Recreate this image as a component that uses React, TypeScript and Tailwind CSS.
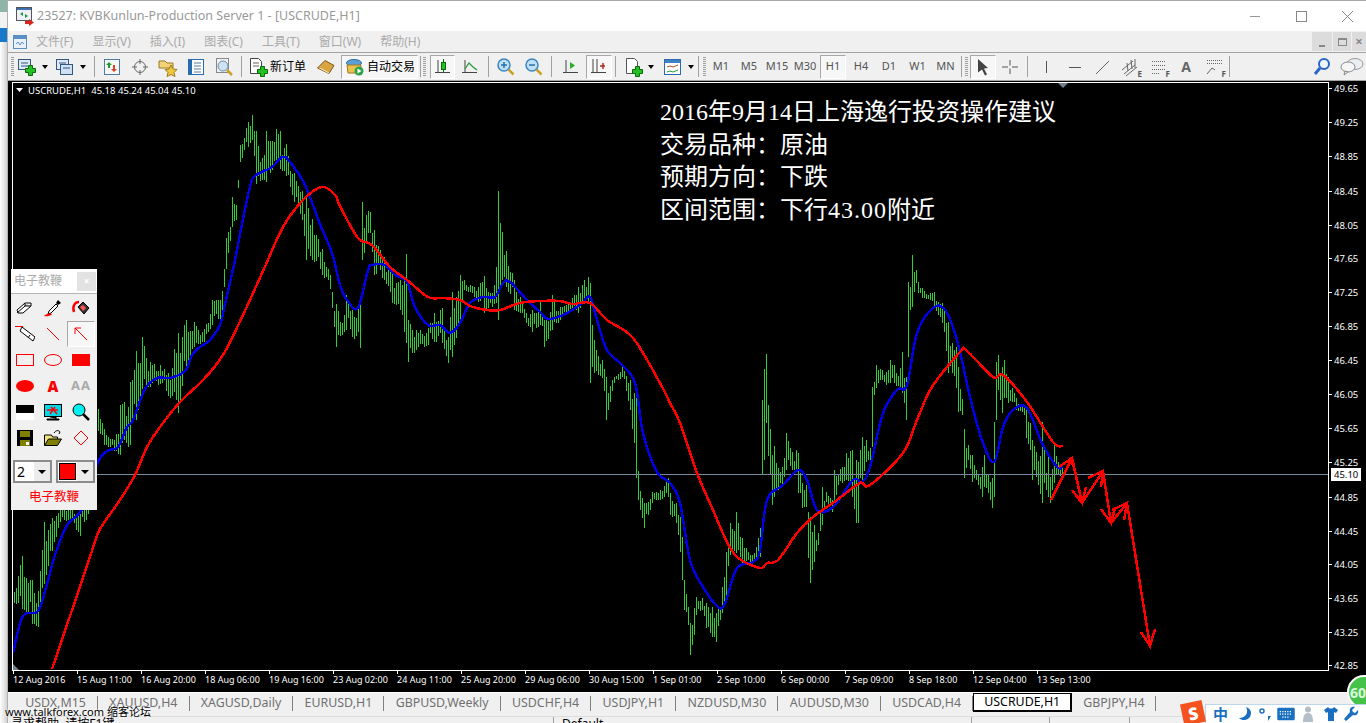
import type { ReactNode } from "react";

const BLUE = "13,653 23,616 38,611 47,584 55,555 67,525 82,509 97,464 107,451 118,447 127,427 133,420 145,389 157,378 170,378 185,371 192,355 200,347 210,340 220,325 225,304 235,260 242,224 250,187 255,176 272,167 282,157 290,162 305,185 320,224 332,253 340,285 347,300 358,308 368,270 373,265 385,265 395,275 407,282 415,307 428,325 440,325 450,333 460,323 470,303 483,297 495,297 503,283 510,282 527,300 540,312 548,319 563,315 580,305 590,297 597,320 607,350 622,365 635,383 643,433 657,472 670,483 680,503 690,560 703,587 718,607 725,603 737,568 753,562 760,550 767,500 783,485 798,470 807,480 817,510 833,507 853,480 862,482 870,467 883,413 897,390 907,385 917,333 933,308 945,310 957,340 970,397 982,440 994,462 1003,427 1013,410 1027,408 1042,443 1057,467 1063,466";
const RED = "52,669 70,616 92,551 100,529 120,500 135,475 147,447 160,427 180,402 203,380 223,355 243,315 263,271 283,227 303,200 322,187 335,195 340,206 358,238 372,245 390,267 407,280 428,297 443,298 460,300 470,306 487,310 500,310 520,303 540,301 560,301 573,304 590,303 607,320 633,338 660,383 670,403 680,423 697,473 713,510 727,542 738,558 760,568 767,563 778,560 797,533 813,517 837,500 860,483 870,485 903,453 917,420 932,387 960,352 967,351 993,377 1003,375 1027,402 1053,442 1063,446";

// x, high, low of the bars, read off the picture
const KEYS: [number, number, number][] = [
  [12,591,602],[22,556,609],[32,580,624],[38,591,627],[45,522,584],[52,518,551],[60,500,522],[70,505,520],[80,511,536],[90,470,510],
  [98,409,431],[105,429,445],[115,440,451],[120,405,455],[130,382,445],[137,351,420],[143,337,389],[150,362,387],[160,365,384],[168,373,396],
  [178,333,413],[187,320,371],[195,322,347],[205,329,342],[212,300,325],[222,291,318],[227,238,269],[232,197,227],[237,205,220],[240,145,162],
  [248,122,147],[253,115,140],[257,131,184],[265,155,180],[267,131,182],[276,129,162],[281,131,169],[287,144,176],[295,173,202],[302,191,220],
  [307,198,260],[313,219,260],[322,249,275],[330,275,289],[337,304,347],[342,323,335],[346,295,330],[352,310,337],[360,300,348],[363,202,260],
  [370,212,233],[375,230,275],[385,257,280],[392,273,303],[400,280,310],[406,254,343],[409,320,362],[416,330,350],[428,328,345],[435,313,342],
  [443,308,343],[448,337,363],[452,292,357],[460,275,320],[465,280,290],[475,287,297],[485,276,313],[492,293,307],[497,267,303],[499,191,320],
  [502,232,280],[507,251,287],[515,280,310],[520,297,313],[527,313,323],[533,310,332],[540,302,325],[545,320,347],[552,295,330],[560,307,320],
  [572,298,308],[578,287,313],[585,280,300],[589,277,303],[591,283,383],[595,340,373],[603,360,378],[606,377,420],[615,377,383],[622,367,377],
  [630,380,410],[637,393,478],[639,471,500],[644,503,528],[652,492,503],[660,490,500],[668,478,497],[671,493,515],[677,503,523],[680,517,552],
  [682,537,580],[685,580,610],[688,607,625],[691,623,655],[694,608,635],[697,597,615],[703,598,610],[707,603,628],[713,607,637],[717,613,642],
  [722,587,613],[726,552,603],[731,523,555],[737,512,553],[743,538,563],[750,555,565],[757,547,560],[760,528,557],[762,400,475],[764,369,460],
  [766,354,423],[768,405,456],[770,429,475],[772,455,505],[774,446,497],[778,468,490],[782,467,485],[787,433,470],[792,452,470],[797,450,470],
  [799,453,493],[803,483,508],[807,485,507],[809,512,558],[811,517,583],[815,525,562],[819,533,545],[822,487,525],[827,492,502],[832,500,512],
  [835,470,500],[842,467,483],[847,453,480],[852,450,497],[856,460,523],[859,462,523],[862,437,482],[867,440,462],[870,448,467],[872,387,447],
  [875,382,395],[877,365,388],[882,370,380],[887,372,385],[890,360,383],[895,365,383],[900,368,390],[903,352,393],[906,377,420],[908,282,357],
  [910,287,310],[912,268,307],[913,255,273],[916,270,283],[918,282,293],[923,288,298],[930,293,300],[935,292,308],[942,303,323],[945,307,332],
  [948,322,373],[952,343,373],[956,347,388],[958,367,412],[962,399,415],[965,429,478],[968,445,460],[972,455,482],[977,470,480],[982,467,497],
  [985,455,487],[988,475,493],[992,478,508],[995,422,497],[997,362,420],[999,355,390],[1002,367,413],[1005,360,398],[1009,377,403],[1013,388,402],
  [1017,398,410],[1022,405,412],[1027,407,438],[1030,423,450],[1033,440,480],[1037,452,477],[1042,422,487],[1043,460,503],[1047,473,490],[1049,452,497],
  [1051,477,503],[1055,443,483],[1059,462,475],[1063,465,478],
];

function barsPath() {
  const map = new Map<number, [number, number]>();
  for (const [x, hi, lo] of KEYS) {
    const bx = x - (x % 2);
    const old = map.get(bx);
    map.set(bx, old ? [Math.min(old[0], hi), Math.max(old[1], lo)] : [hi, lo]);
  }
  const xs = [...map.keys()].sort((a, b) => a - b);
  let d = "";
  for (let i = 0; i < xs.length - 1; i++) {
    const a = xs[i];
    const b = xs[i + 1];
    const [h0, l0] = map.get(a)!;
    const [h1, l1] = map.get(b)!;
    for (let x = a; x < b; x += 2) {
      const t = (x - a) / (b - a);
      const hi = h0 + (h1 - h0) * t;
      const lo = l0 + (l1 - l0) * t;
      if (x === a) {
        d += `M${x + 0.5} ${hi}V${lo}`;
      } else {
        // bars between two read points only fill part of the band
        const r1 = Math.abs(Math.sin(x * 12.9898));
        const r2 = Math.abs(Math.sin(x * 78.233));
        const len = (lo - hi) * (0.45 + 0.3 * r1);
        const top = Math.round(hi + (lo - hi - len) * r2);
        d += `M${x + 0.5} ${top}V${Math.round(top + len)}`;
      }
    }
  }
  const last = xs[xs.length - 1];
  return d + `M${last + 0.5} ${map.get(last)![0]}V${map.get(last)![1]}`;
}

// catmull-rom through the read points, the moving averages are smooth curves
function smooth(points: string) {
  const p = points.split(" ").map((s) => s.split(",").map(Number));
  let d = `M${p[0][0]} ${p[0][1]}`;
  for (let i = 0; i < p.length - 1; i++) {
    const a = p[Math.max(i - 1, 0)];
    const b = p[i];
    const c = p[i + 1];
    const e = p[Math.min(i + 2, p.length - 1)];
    const c1 = [b[0] + (c[0] - a[0]) / 6, b[1] + (c[1] - a[1]) / 6];
    const c2 = [c[0] - (e[0] - b[0]) / 6, c[1] - (e[1] - b[1]) / 6];
    d += `C${c1[0].toFixed(1)} ${c1[1].toFixed(1)} ${c2[0].toFixed(1)} ${c2[1].toFixed(1)} ${c[0]} ${c[1]}`;
  }
  return d;
}

const PRICES: [string, number][] = [
  ["49.65", 88],["49.25", 122],["48.85", 156],["48.45", 191],["48.05", 225],["47.65", 258],["47.25", 292],["46.85", 326],["46.45", 360],
  ["46.05", 394],["45.65", 428],["45.25", 462],["44.85", 497],["44.45", 531],["44.05", 564],["43.65", 598],["43.25", 632],["42.85", 665],
];

const TIMES = [
  "12 Aug 2016","15 Aug 11:00","16 Aug 20:00","18 Aug 06:00","19 Aug 16:00","23 Aug 02:00","24 Aug 11:00","25 Aug 20:00","29 Aug 06:00",
  "30 Aug 15:00","1 Sep 01:00","2 Sep 10:00","6 Sep 00:00","7 Sep 09:00","8 Sep 18:00","12 Sep 04:00","13 Sep 13:00",
];

const ARROWS = [
  "1051,500 1072,458", "1059,467 1072,458 1073,467",
  "1072,458 1082,503", "1072,490 1082,503 1086,487",
  "1082,503 1103,471", "1088,478 1103,471 1101,487",
  "1103,471 1111,523", "1101,509 1111,523 1115,508",
  "1111,523 1127,503", "1112,510 1127,503 1124,520",
  "1127,503 1150,646", "1141,632 1150,646 1155,629",
];

const MENUS = ["文件(F)", "显示(V)", "插入(I)", "图表(C)", "工具(T)", "窗口(W)", "帮助(H)"];
const TABS = ["USDX,M15", "XAUUSD,H4", "XAGUSD,Daily", "EURUSD,H1", "GBPUSD,Weekly", "USDCHF,H4", "USDJPY,H1", "NZDUSD,M30", "AUDUSD,M30", "USDCAD,H4"];

function Ico({ children }: { children: ReactNode }) {
  return <svg viewBox="0 0 20 20" className="h-5 w-5 shrink-0">{children}</svg>;
}

function Plus({ x, y }: { x: number; y: number }) {
  return <path transform={`translate(${x} ${y})`} d="M3.5.5h4v3h3v4h-3v3h-4v-3h-3v-4h3z" fill="#25c025" stroke="#0b6b0b" />;
}

function Grip() {
  return <div className="mx-[1px] h-[20px] w-[3px] shrink-0 bg-[repeating-linear-gradient(#a0a0a0_0_1px,transparent_1px_2px)]" />;
}

function Sep({ className }: { className: string }) {
  return (
    <div className={`flex shrink-0 justify-center ${className}`}>
      <div className="h-[21px] w-[1px] bg-[#a0a0a0]" />
    </div>
  );
}

function Caret() {
  return <div className="h-0 w-0 shrink-0 border-x-[3px] border-t-[4px] border-x-transparent border-t-black" />;
}

function Cell({ className, children }: { className: string; children?: ReactNode }) {
  return <div className={`flex h-[24px] shrink-0 items-center justify-center ${className}`}>{children}</div>;
}

const PRESSED = "border border-t-[#a8a8a8] border-l-[#a8a8a8] border-r-white border-b-white bg-[#f7f7f7]";

function Axes() {
  return <path d="M5 3v13M2 15.500h15" stroke="#444" fill="none" />;
}

function Toolbar() {
  return (
    <div className="flex h-[29px] shrink-0 items-center border-t border-b border-[#a4a4a4] bg-[#f0f0f0] pl-[1px] text-[11px] text-[#555]">
      <div className="ml-[1px]"><Grip /></div>
      <Cell className="w-[38px] justify-start pl-[2px]">
        <Ico><rect x="1.500" y="2.500" width="12" height="10" fill="#dfe9f5" stroke="#33577f" /><path d="M4 6h7M4 9h7" stroke="#33577f" /><Plus x={8} y={8} /></Ico>
        <div className="ml-[5px]"><Caret /></div>
      </Cell>
      <Cell className="w-[38px] justify-start pl-[2px]">
        <Ico><rect x="1.500" y="2.500" width="12" height="10" fill="#dfe9f5" stroke="#33577f" /><rect x="5.500" y="7.500" width="12" height="10" fill="#cfe0f2" stroke="#33577f" /><path d="M4 6h7M8 11h7" stroke="#33577f" /></Ico>
        <div className="ml-[5px]"><Caret /></div>
      </Cell>
      <Sep className="w-[7px]" />
      <Cell className="w-[28px]">
        <Ico><rect x="2.500" y="2.500" width="15" height="15" fill="#f5f5f5" stroke="#4d7ca8" /><path d="M7 5l-3 3h2v3h2V8h2z" fill="#1f9a2c" /><path d="M12 15l3-3h-2V8h-2v4H9z" fill="#d9462a" /></Ico>
      </Cell>
      <Cell className="w-[28px]">
        <Ico><circle cx="10" cy="10" r="5.500" fill="none" stroke="#666" /><path d="M10 2v5M10 13v5M2 10h5M13 10h5" stroke="#666" /></Ico>
      </Cell>
      <Cell className="w-[28px]">
        <Ico><path d="M1 4h6l2 2h6v5H1z" fill="#f3d27a" stroke="#9a7a20" /><path d="M13 8l2 4 4 .5-3 3 1 4-4-2-4 2 1-4-3-3 4-.5z" fill="#f0c83a" stroke="#9a7a20" /></Ico>
      </Cell>
      <Cell className="w-[28px]">
        <Ico><rect x="2.500" y="2.500" width="15" height="15" fill="#fff" stroke="#2a6bb0" /><rect x="3" y="3" width="3" height="14" fill="#2a6bb0" /><path d="M8 6h7M8 9h7M8 12h7M8 15h7" stroke="#5a7a9a" /></Ico>
      </Cell>
      <Cell className="w-[28px]">
        <Ico><rect x="2.500" y="1.500" width="12" height="14" fill="#eef2f6" stroke="#888" /><circle cx="9" cy="9" r="5" fill="#cfe2f2" stroke="#6b8aa8" /><path d="M13 13l5 5" stroke="#c9a227" strokeWidth="2.500" /></Ico>
      </Cell>
      <Sep className="w-[7px]" />
      <Cell className="w-[66px] justify-start gap-[2px] pl-[3px] text-[12px] text-black">
        <Ico><path d="M2.500 1.500h8l3 3v12h-11z" fill="#fff" stroke="#444" /><path d="M5 6h6M5 9h6" stroke="#666" /><Plus x={9} y={9} /></Ico>
        <span>新订单</span>
      </Cell>
      <Cell className="w-[30px]">
        <Ico><path d="M1.500 11L9 3.500l9 5-5 8z" fill="#d9a441" stroke="#7a5a18" /><path d="M3.500 11l9.500 5" stroke="#fff1c4" /></Ico>
      </Cell>
      <Cell className={`w-[77px] justify-start gap-[2px] pl-[3px] text-[12px] text-black ${PRESSED}`}>
        <Ico><ellipse cx="9" cy="6" rx="7.500" ry="3.500" fill="#5aa0d8" stroke="#2f6a9c" /><path d="M2 8h14l-1 8H3z" fill="#eec24a" stroke="#9a7a20" /><circle cx="14" cy="14" r="4.500" fill="#2ea34a" /><path d="M12.500 11.500v5l4-2.500z" fill="#fff" /></Ico>
        <span>自动交易</span>
      </Cell>
      <Sep className="w-[4px]" />
      <Grip />
      <Cell className={`ml-[3px] w-[25px] ${PRESSED}`}>
        <Ico><Axes /><rect x="8.500" y="5.500" width="4" height="7" fill="#25c025" stroke="#0b6b0b" /><path d="M10.500 2v3M10.500 13v2" stroke="#0b6b0b" /></Ico>
      </Cell>
      <Cell className="w-[30px]">
        <Ico><Axes /><path d="M5 12l4-6 4 4 4 3" stroke="#2a9a3a" fill="none" strokeWidth="1.300" /></Ico>
      </Cell>
      <Sep className="w-[7px]" />
      <Cell className="w-[28px]">
        <Ico><circle cx="8" cy="8" r="6" fill="#bfe0f5" stroke="#3c86c0" strokeWidth="1.500" /><path d="M5 8h6M8 5v6" stroke="#2a70a8" strokeWidth="1.500" /><path d="M12.500 12.500l5 5" stroke="#c9a227" strokeWidth="2.500" /></Ico>
      </Cell>
      <Cell className="w-[28px]">
        <Ico><circle cx="8" cy="8" r="6" fill="#bfe0f5" stroke="#3c86c0" strokeWidth="1.500" /><path d="M5 8h6" stroke="#2a70a8" strokeWidth="1.500" /><path d="M12.500 12.500l5 5" stroke="#c9a227" strokeWidth="2.500" /></Ico>
      </Cell>
      <Sep className="w-[7px]" />
      <Cell className="w-[31px]">
        <Ico><Axes /><path d="M9 5v7l5-3.500z" fill="#25b025" /></Ico>
      </Cell>
      <Cell className={`w-[26px] ${PRESSED}`}>
        <Ico><path d="M4 2v14M8 2v14M2 15.500h15" stroke="#444" fill="none" /><path d="M11 9h5M14 6v6" stroke="#b02a1a" strokeWidth="1.500" /></Ico>
      </Cell>
      <Sep className="w-[7px]" />
      <Cell className="w-[38px] justify-start pl-[5px]">
        <Ico><path d="M2.500 1.500h8l3 3v12h-11z" fill="#fff" stroke="#555" /><Plus x={8} y={9} /></Ico>
        <div className="ml-[4px]"><Caret /></div>
      </Cell>
      <Cell className="w-[38px] justify-start pl-[6px]">
        <Ico><rect x="1.500" y="2.500" width="16" height="15" fill="#fff" stroke="#2a6bb0" /><rect x="2" y="3" width="15" height="3" fill="#3f82c4" /><path d="M4 10l3-1 3 1 5-2" stroke="#b5501e" fill="none" /><path d="M4 15l3-1 3 1 5-2" stroke="#2a9a3a" fill="none" /></Ico>
        <div className="ml-[5px]"><Caret /></div>
      </Cell>
      <Sep className="w-[7px]" />
      <Grip />
      <Cell className="w-[28px]">M1</Cell>
      <Cell className="w-[28px]">M5</Cell>
      <Cell className="w-[28px]">M15</Cell>
      <Cell className="w-[28px]">M30</Cell>
      <Cell className={`mx-[1px] w-[26px] ${PRESSED}`}>H1</Cell>
      <Cell className="w-[28px]">H4</Cell>
      <Cell className="w-[28px]">D1</Cell>
      <Cell className="w-[29px]">W1</Cell>
      <Cell className="w-[27px]">MN</Cell>
      <Sep className="w-[5px]" />
      <Grip />
      <Cell className={`ml-[1px] w-[26px] ${PRESSED}`}>
        <Ico><path d="M5 2l10 9-4 .5 3 6-2 1-3-6-4 3z" fill="#444" /></Ico>
      </Cell>
      <Cell className="w-[28px]">
        <Ico><path d="M10 3v5.500M10 11.500V17M2 10h6M12 10h6" stroke="#555" /></Ico>
      </Cell>
      <Sep className="w-[7px]" />
      <Cell className="w-[29px]"><Ico><path d="M10.500 4v12" stroke="#555" /></Ico></Cell>
      <Cell className="w-[29px]"><Ico><path d="M4 10.500h12" stroke="#555" /></Ico></Cell>
      <Cell className="w-[28px]"><Ico><path d="M3 17L16 4" stroke="#666" /></Ico></Cell>
      <Cell className="relative w-[27px]">
        <Ico><path d="M1 13L12 4M3 17l11-9M5 19L16 10M6 6l1 8M10 3l1 9M14 2l0 9" stroke="#666" fill="none" /></Ico>
        <span className="absolute right-[2px] bottom-[1px] text-[8px] leading-none font-bold">E</span>
      </Cell>
      <Cell className="relative w-[28px]">
        <Ico><path d="M4 4.500h13M4 8.500h13M4 12.500h13M4 16.500h8" stroke="#666" strokeDasharray="1 1" /></Ico>
        <span className="absolute right-[2px] bottom-[1px] text-[8px] leading-none font-bold">F</span>
      </Cell>
      <Cell className="w-[28px] text-[14px] font-bold text-[#666]">A</Cell>
      <Cell className="relative w-[28px]">
        <Ico><path d="M3 3.500h15M3 6.500h15" stroke="#666" strokeDasharray="1 1" /><path d="M3 17l5-6 3 2" stroke="#666" fill="none" /></Ico>
        <span className="absolute right-[2px] bottom-[1px] text-[8px] leading-none font-bold">F</span>
      </Cell>
      <Sep className="w-[3px]" />
      <Cell className="ml-auto w-[28px]">
        <Ico><circle cx="12" cy="7" r="5" fill="#eef5fc" stroke="#2a66c8" strokeWidth="2" /><path d="M8 11l-5 6" stroke="#2a66c8" strokeWidth="3" /></Ico>
      </Cell>
      <Cell className="ml-[2px] w-[28px]">
        <svg viewBox="0 0 24 20" className="h-5 w-6">
          <ellipse cx="15" cy="7" rx="8" ry="5.500" fill="#e8eef2" stroke="#999" />
          <ellipse cx="8" cy="10" rx="7" ry="5" fill="#f6f6f6" stroke="#888" />
          <path d="M5 14l-1 4 4-3z" fill="#f6f6f6" stroke="#888" />
        </svg>
      </Cell>
    </div>
  );
}

function Chart() {
  return (
    <svg viewBox="8 81 1358 611" className="block h-[611px] w-[1358px] bg-black font-['Noto_Sans',sans-serif] text-[9.500px]">
      <path d={barsPath()} stroke="#32cd32" strokeWidth="1" shapeRendering="crispEdges" />
      <path d="M12 474.500H1329" stroke="#778899" shapeRendering="crispEdges" />
      <path d={smooth(BLUE)} fill="none" stroke="#0000e0" strokeWidth="2.500" shapeRendering="crispEdges" />
      <path d={smooth(RED)} fill="none" stroke="#ff0000" strokeWidth="2.500" shapeRendering="crispEdges" />
      {ARROWS.map((p) => (
        <polyline key={p} points={p} fill="none" stroke="#ff0000" strokeWidth="2.500" shapeRendering="crispEdges" />
      ))}
      <rect x="12.500" y="82.500" width="1316" height="588" fill="none" stroke="#fff" shapeRendering="crispEdges" />
      <path d="M1058 83h10l-5 5z" fill="#708090" />
      <path d="M13 664v6h6z" fill="#708090" />
      <path d="M16 88h7l-3.500 4z" fill="#fff" />
      <text x="28" y="94" fill="#fff">USCRUDE,H1&#160;&#160;45.18 45.24 45.04 45.10</text>
      {PRICES.map(([label, y]) => (
        <g key={label}>
          <path d={`M1329 ${y + 0.5}h3`} stroke="#fff" />
          <text x="1334" y={y + 4} fill="#fff">{label}</text>
        </g>
      ))}
      <rect x="1331" y="468" width="30" height="13" fill="#fff" />
      <text x="1334" y="478" fill="#000">45.10</text>
      {TIMES.map((label, i) => (
        <g key={label}>
          <path d={`M${13.5 + i * 64} 671v3`} stroke="#fff" />
          <text x={13 + i * 64} y="683" fill="#fff" className="text-[9px]">{label}</text>
        </g>
      ))}
    </svg>
  );
}

function Panel() {
  return (
    <div className="absolute top-[269px] left-[11px] h-[241px] w-[86px] bg-[#f0f0f0]">
      <div className="flex h-[25px] items-center justify-between border-b border-[#b4b4b4] bg-white pr-[1px] pl-[3px] text-[12px] text-[#aaa]">
        <span>电子教鞭</span>
        <div className="flex h-[19px] w-[19px] items-center justify-center bg-[#e2e2e2] text-[10px] font-bold text-white">×</div>
      </div>
      <div className="mt-[1px] grid grid-cols-[28px_28px_28px]">
        <PanelCell><path d="M2 12l8-7h6v3l-8 7H3z" fill="#fff" stroke="#000" /><path d="M10 5v3h6M10 8l-8 7" stroke="#000" fill="#ccc" /></PanelCell>
        <PanelCell><path d="M15 2l3 3-3 2-2-2z" fill="#000" /><path d="M13 6l-7 7-1 3 3-1 7-7z" fill="#fff" stroke="#000" /><path d="M1 18c2-2 6-3 8-2 0 1-4 3-8 2z" fill="#f00" /></PanelCell>
        <PanelCell><path d="M3 14C1 8 4 4 8 4" fill="none" stroke="#f00" strokeWidth="2.500" /><path d="M7 9l5-5 6 6-5 6z" fill="#333" stroke="#000" /><path d="M9 9l3-2 3 3-3 3z" fill="#f55" /></PanelCell>
        <PanelCell><path d="M0 2.500h8" stroke="#f00" /><path d="M7 3l13 10-2 4L5 7z" fill="#fff" stroke="#000" /><path d="M15 11l-2 3" stroke="#000" /></PanelCell>
        <PanelCell><path d="M4 4l12 12" stroke="#f00" /></PanelCell>
        <div className={`flex h-[26px] items-center justify-center ${PRESSED}`}>
          <Ico><path d="M4 4l12 12M4 4v6M4 4h6" stroke="#f00" fill="none" /></Ico>
        </div>
        <PanelCell><rect x="1.500" y="4.500" width="17" height="11" fill="none" stroke="#f00" /></PanelCell>
        <PanelCell><ellipse cx="10" cy="10" rx="8.500" ry="5.500" fill="none" stroke="#f00" /></PanelCell>
        <PanelCell><rect x="1" y="4" width="18" height="12" fill="#f00" /></PanelCell>
        <PanelCell><ellipse cx="10" cy="10" rx="9" ry="6" fill="#f00" /></PanelCell>
        <div className="flex h-[26px] items-center justify-center text-[15px] font-black text-[#f00]">A</div>
        <div className="flex h-[26px] items-center justify-center text-[13px] font-bold tracking-[1px] text-[#aaa]">AA</div>
        <PanelCell><rect x="1" y="3" width="18" height="8" fill="#000" /><rect x="1" y="11" width="18" height="7" fill="#fff" /></PanelCell>
        <PanelCell><rect x="1.500" y="2.500" width="17" height="12" fill="#00d8e8" stroke="#000" /><path d="M4 8h11M12 5L7 12M8 5l6 7" stroke="#f00" strokeWidth="1.500" /><path d="M7 15h6v2H4v1h12v-1h-3" fill="#000" stroke="#000" /></PanelCell>
        <PanelCell><circle cx="8" cy="8" r="6" fill="#00f0f0" stroke="#000" /><path d="M12 12l6 6" stroke="#000" strokeWidth="2.500" /></PanelCell>
        <PanelCell><rect x="2" y="2" width="16" height="16" fill="#000" /><rect x="5" y="3" width="10" height="6" fill="#808000" /><rect x="5" y="12" width="10" height="6" fill="#808000" /><rect x="11" y="14" width="3" height="3" fill="#fff" /></PanelCell>
        <PanelCell><path d="M1.500 17.500V7h7l1 2h5v2" fill="#f4e27a" stroke="#000" /><path d="M1.500 17.500l4-6.500h13l-4 6.500z" fill="#808000" stroke="#000" /><path d="M11 5c2-3 5-3 6-1l-1 2" fill="none" stroke="#000" /></PanelCell>
        <PanelCell><path d="M10 3l7 7-7 7-7-7z" fill="none" stroke="#f00" /></PanelCell>
      </div>
      <div className="mt-[9px] flex h-[23px] justify-between px-[2px]">
        <div className="flex w-[39px] border-2 border-[#8c8c8c] bg-white">
          <span className="flex-1 pl-[2px] text-[14px] leading-[19px] text-black">2</span>
          <div className="flex w-[16px] items-center justify-center bg-[#ececec]"><div className="h-0 w-0 border-x-[4px] border-t-[4px] border-x-transparent border-t-black" /></div>
        </div>
        <div className="flex w-[39px] border-2 border-[#8c8c8c] bg-[#f0f0f0]">
          <div className="flex flex-1 items-center justify-center"><div className="h-[17px] w-[17px] border border-black bg-[#f00] outline outline-1 outline-offset-0 outline-white" /></div>
          <div className="flex w-[16px] items-center justify-center bg-[#ececec]"><div className="h-0 w-0 border-x-[4px] border-t-[4px] border-x-transparent border-t-black" /></div>
        </div>
      </div>
      <div className="mt-[2px] text-center text-[12.500px] leading-[24px] text-[#f00]">电子教鞭</div>
    </div>
  );
}

function PanelCell({ children }: { children: ReactNode }) {
  return <div className="flex h-[26px] items-center justify-center"><Ico>{children}</Ico></div>;
}

function Tabs() {
  return (
    <div className="flex h-[24px] shrink-0 items-start border-t border-white bg-[#f0f0f0] pl-[6px] text-[12.400px] text-[#707070]">
      {TABS.map((t) => (
        <div key={t} className="mt-[3px] flex h-[15px] items-center border-r border-[#808080] px-[11.200px] whitespace-nowrap">{t}</div>
      ))}
      <div className="flex h-[19px] items-center border border-r-2 border-b-2 border-black bg-white px-[10px] whitespace-nowrap text-black">USCRUDE,H1</div>
      <div className="mt-[3px] flex h-[15px] items-center border-r border-[#808080] px-[11px] whitespace-nowrap">GBPJPY,H4</div>
    </div>
  );
}

function Sogou() {
  return (
    <div className="absolute right-0 bottom-0 flex h-[19px] w-[161px] items-center border-t border-l border-[#bcd6ee] bg-white pl-[7px]">
      <div className="absolute -top-[3px] -left-[24px] flex h-[22px] w-[22px] -rotate-12 items-center justify-center bg-[#f4521e] text-[17px] leading-none font-black text-white">S</div>
      <span className="w-[22px] text-[15px] leading-none font-bold text-[#1a6fc0]">中</span>
      <svg viewBox="0 0 16 16" className="ml-[2px] h-4 w-4"><path d="M9 1c3 5 0 11-7 11 4 4 12 2 12-5 0-3-2-5-5-6z" fill="#1a6fc0" /></svg>
      <svg viewBox="0 0 16 16" className="ml-[5px] h-4 w-4"><circle cx="4" cy="5" r="2" fill="none" stroke="#1a6fc0" strokeWidth="1.500" /><path d="M10 10h3l-3 5z" fill="#1a6fc0" /></svg>
      <svg viewBox="0 0 16 16" className="ml-[4px] h-4 w-4 scale-125"><rect x="1" y="3" width="14" height="10" rx="1" fill="#1a6fc0" /><path d="M3 6h10M3 8h10M5 10.500h6" stroke="#fff" strokeDasharray="1 1" /></svg>
      <svg viewBox="0 0 16 16" className="ml-[7px] h-4 w-4"><circle cx="7" cy="3.500" r="3" fill="#b4bec8" /><path d="M2 16c0-7 2-9 5-9s5 2 5 9z" fill="#b4bec8" /></svg>
      <svg viewBox="0 0 16 16" className="ml-[6px] h-4 w-4"><path d="M5 1L1 4l2 3 2-1v9h6V6l2 1 2-3-4-3c-1 2-5 2-6 0z" fill="#1a6fc0" /></svg>
      <svg viewBox="0 0 16 16" className="ml-[4px] h-4 w-4"><path d="M15 4l-3 3-2-1-1-2 3-3C8 0 6 3 7 6l-6 7 2 2 7-6c3 1 6-1 5-5z" fill="#1a6fc0" /></svg>
    </div>
  );
}

export default function App() {
  return (
    <div className="relative flex h-[723px] w-[1366px] overflow-hidden bg-white font-['Noto_Sans','Noto_Sans_CJK_SC',sans-serif]">
      <div className="flex w-[8px] shrink-0 flex-col border-r border-[#b0b0b0]">
        <div className="h-[12px] bg-[#8fb4a8]" />
        <div className="h-[16px] bg-[#f2f2f2]" />
        <div className="h-[14px] bg-[#1a78c8]" />
        <div className="flex-1 bg-gradient-to-r from-white to-[#d4d4d4]" />
      </div>
      <div className="flex min-w-0 flex-1 flex-col">
        <div className="flex h-[31px] shrink-0 items-center border-t border-[#a8a8a8] bg-white text-[12.500px] text-[#999]">
          <svg viewBox="0 0 20 20" className="ml-[8px] h-[20px] w-[20px] shrink-0">
            <rect x="0.500" y="1.500" width="15" height="13" fill="#eef2f8" stroke="#555" />
            <rect x="1" y="2" width="14" height="2" fill="#3e6fb0" />
            <path d="M4 8l3-2v4zM12 10L9 8v4z" fill="#1e9a3a" />
            <path d="M9 15h4v-2l5 3.500-5 3.500v-2H9z" fill="#d8261c" />
          </svg>
          <span className="ml-[1px]">23527: KVBKunlun-Production Server 1 - [USCRUDE,H1]</span>
          <div className="-mr-[4px] ml-auto flex items-center">
            <svg viewBox="0 0 46 46" className="h-[46px] w-[46px]"><path d="M18 23.500h10" stroke="#999" /></svg>
            <svg viewBox="0 0 46 46" className="h-[46px] w-[46px]"><rect x="18.500" y="18.500" width="10" height="10" fill="none" stroke="#888" /></svg>
            <svg viewBox="0 0 46 46" className="h-[46px] w-[46px]"><path d="M18 18l11 11M29 18L18 29" stroke="#888" /></svg>
          </div>
        </div>
        <div className="flex h-[21px] shrink-0 items-center bg-[#f0f0f0] text-[12px] text-[#aaa]">
          <svg viewBox="0 0 16 16" className="ml-[4px] h-[16px] w-[16px] shrink-0"><rect x="1.500" y="1.500" width="13" height="13" fill="#e8f0f8" stroke="#5a8fc4" /><rect x="2" y="2" width="12" height="3" fill="#5a8fc4" /><path d="M4 10l2-2 2 3 2-3 2 2" stroke="#5a8fc4" fill="none" /></svg>
          <div className="ml-[8px] flex gap-[19px]">
            {MENUS.map((m) => <span key={m}>{m}</span>)}
          </div>
          <div className="ml-auto flex h-[19px] gap-[1px]">
            <div className="flex w-[20px] items-end justify-center bg-[#dcdcdc] pb-[4px]"><div className="h-[2px] w-[6px] bg-[#888]" /></div>
            <div className="flex w-[18px] items-center justify-center bg-[#dcdcdc]"><div className="h-[8px] w-[9px] border border-t-2 border-[#888]" /></div>
            <div className="flex w-[14px] items-center justify-center bg-[#dcdcdc] text-[13px] leading-none font-bold text-[#888]">×</div>
          </div>
        </div>
        <Toolbar />
        <div className="relative h-[611px] shrink-0">
          <Chart />
          <div className="absolute top-[15px] left-[652px] font-['Liberation_Serif','Noto_Sans_CJK_SC',serif] text-[24px] leading-[32.500px] whitespace-nowrap text-white">
            <div>2016年9月14日上海逸行投资操作建议</div>
            <div>交易品种：原油</div>
            <div>预期方向：下跌</div>
            <div>区间范围：下行<span className="tracking-[1px]">43.00</span>附近</div>
          </div>
        </div>
        <Tabs />
        <div className="flex h-[7px] shrink-0 border-t border-[#dcdcdc] bg-[#f0f0f0] text-[12px] leading-[14px] text-black">
          <div className="w-[545px] shrink-0 pl-[3px]">寻求帮助, 请按F1键</div>
          <div className="w-[418px] shrink-0 border-l border-[#a0a0a0] pl-[8px]">Default</div>
          <div className="w-[78px] shrink-0 border-l border-[#a0a0a0]" />
          <div className="w-[80px] shrink-0 border-l border-[#a0a0a0]" />
          <div className="flex-1 border-l border-[#a0a0a0]" />
        </div>
      </div>
      <div className="absolute top-[675px] left-[1347px] flex h-[34px] w-[34px] items-center rounded-full border-2 border-white bg-[#46c24a] pl-[1px] text-[14px] font-bold text-[#d8ffd8]">60</div>
      <Panel />
      <div className="absolute top-[704px] left-[5px] text-[11px] leading-[16px] whitespace-nowrap text-black [text-shadow:0_0_2px_#fff,0_0_2px_#fff]">www.talkforex.com 缩客论坛</div>
      <Sogou />
    </div>
  );
}
